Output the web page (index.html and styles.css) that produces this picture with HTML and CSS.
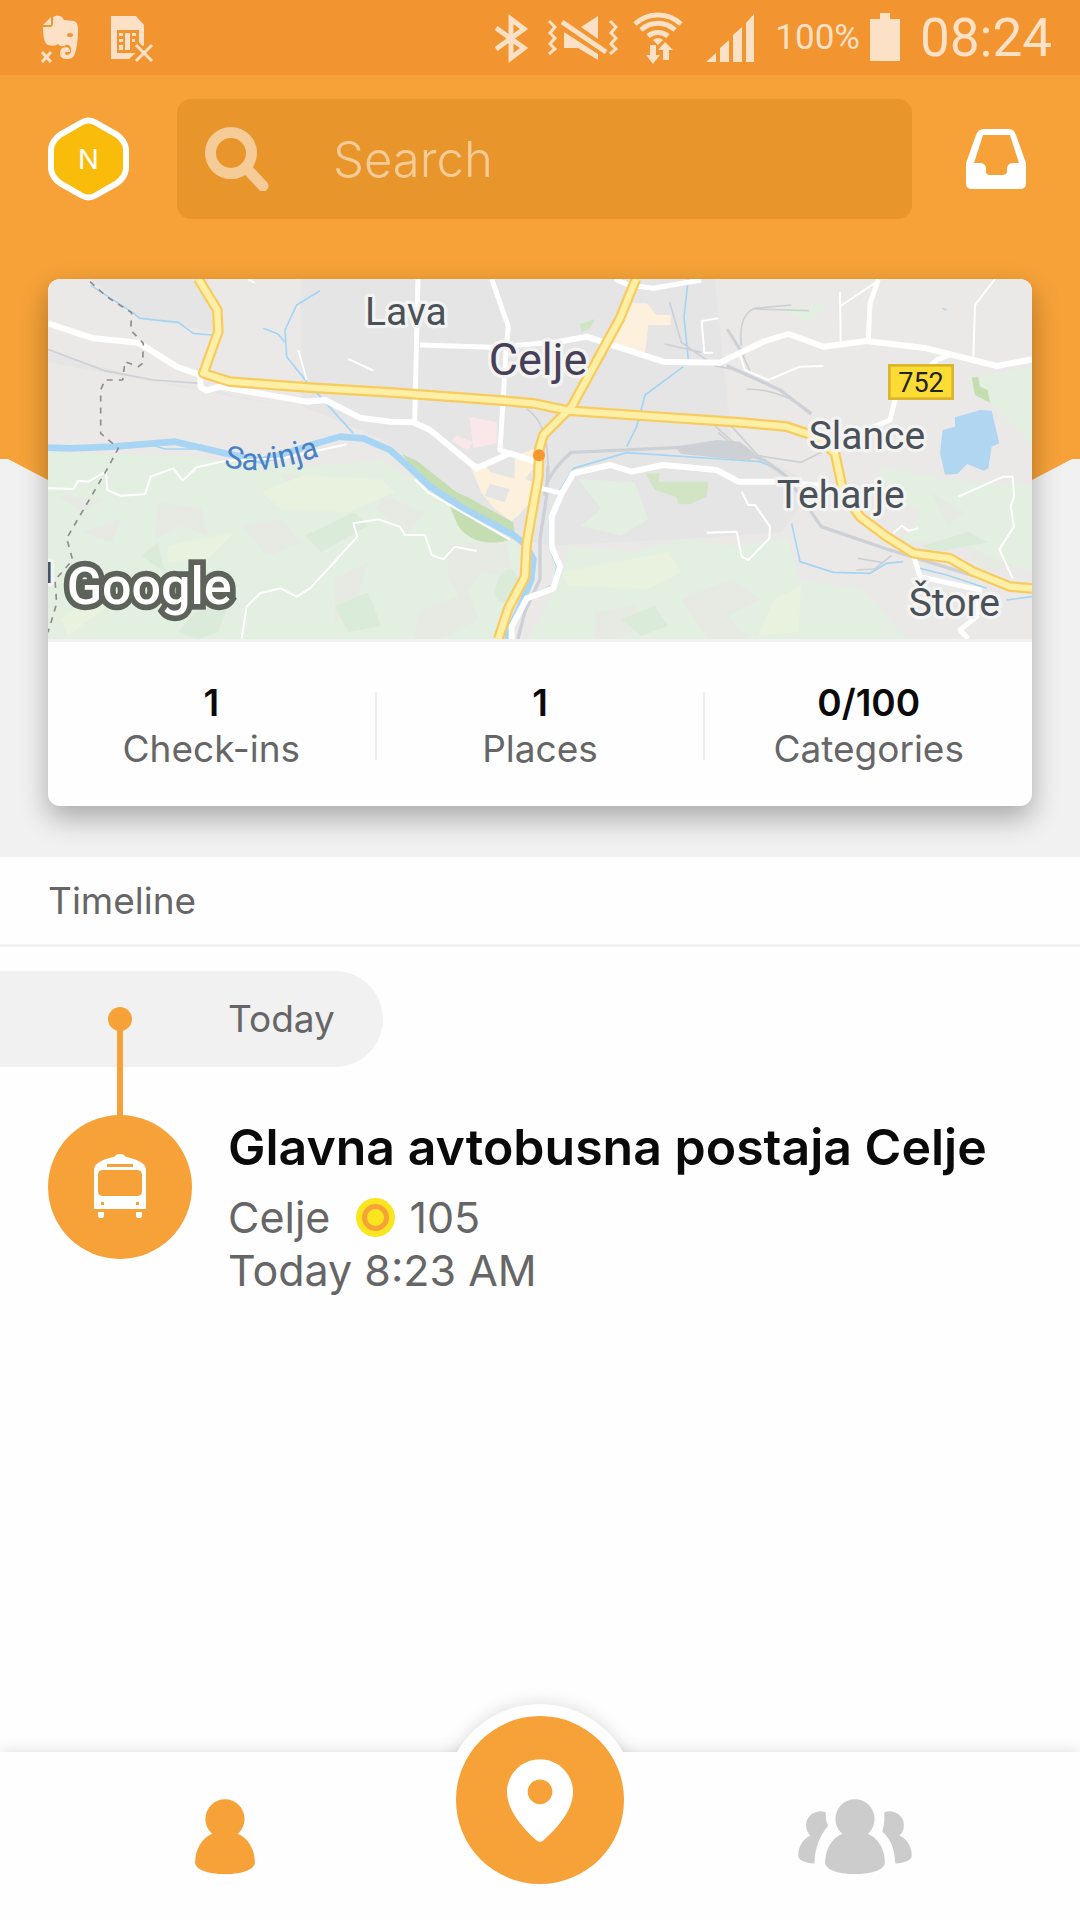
FILE: index.html
```
<!DOCTYPE html>
<html lang="en">
<head>
    <meta charset="UTF-8">
    <meta name="viewport" content="width=device-width, initial-scale=1">
    <title>Profile</title>
    <link rel="stylesheet" href="styles.css">
</head>
<body>
    <div class="status-bar">
        <div class="status-left">
            <svg width="70" height="54" viewBox="0 0 70 54">
                <path d="M2 14L10 6V14Z"/>
                <path d="M2 16H10Q12 15 12 12V6Q16 3 21 6L23 9L33 10Q37 11 37 18Q37 36 33 45Q31 48 26 48Q19 48 19 42Q19 36 26 36Q29 37 29 41H25Q23 42 25 44Q31 44 30 38Q29 33 25 34Q20 37 17 33Q14 36 7 34Q2 32 2 16Z"/>
                <ellipse class="cut" cx="29" cy="24" rx="3" ry="2"/>
                <path class="line" d="M1 41L10 51M10 41L1 51"/>
            </svg>
            <svg width="43" height="54" viewBox="0 0 43 54">
                <path d="M0 5H25L33 14V34L18 48H0Z"/>
                <path class="cut" d="M6 19H28V42H6Z"/>
                <path d="M8 22H12V25H8ZM8 28H12V31H8ZM8 34H12V39H8ZM14 22H19V39H14ZM21 22H25V25H21ZM21 28H24V31H21Z"/>
                <path class="line halo" d="M25 34L41 50M41 34L25 50"/>
                <path class="line" d="M25 34L41 50M41 34L25 50"/>
            </svg>
        </div>
        <div class="status-right">
            <svg width="43" height="54" viewBox="0 0 43 54">
                <path class="line bold" d="M1 17L29 37L16 47V8L29 18L1 38"/>
            </svg>
            <svg width="75" height="54" viewBox="0 0 75 54">
                <path class="line" d="M1 10L7 16L2 22L7 27L2 33L7 38L1 43M62 10L68 16L63 22L68 27L63 33L68 38L62 43"/>
                <path class="line bold" d="M14 11L58 41"/>
                <path d="M33 16L50 5V28ZM16 21L50 43V49L30 37H16Z"/>
            </svg>
            <svg width="63" height="54" viewBox="0 0 63 54">
                <path class="line bold" d="M2 13A34 34 0 0 1 48 13M8 19A25 25 0 0 1 42 19M15 25A16 16 0 0 1 35 25"/>
                <path d="M20 29Q25 25 30 29L25 34ZM17 34H23V44H27L20 53L13 44H17ZM32 31L40 39H36V49H30V39H25Z"/>
            </svg>
            <svg width="59" height="54" viewBox="0 0 59 54">
                <path d="M0 51L10 42V51ZM14 51V37L23 29V51ZM27 51V24L36 16V51ZM40 51V12L48 3V51Z"/>
            </svg>
            <span class="battery-text">100%</span>
            <svg width="40" height="54" viewBox="0 0 40 54">
                <path d="M0 8H10V2H20V8H30V50H0Z"/>
            </svg>
            <span class="clock">08:24</span>
        </div>
    </div>

    <header class="hero">
        <div class="top-bar">
            <button type="button" class="avatar" aria-label="Profile">
                <svg width="81" height="84" viewBox="0 0 82 84">
                    <path class="avatar-shape" d="M34 5Q41 1 48 5L69 17Q78 23 79 32V52Q78 61 69 67L48 79Q41 83 34 79L13 67Q4 61 3 52V32Q4 23 13 17Z"/>
                    <text class="avatar-letter" x="41" y="52">N</text>
                </svg>
            </button>
            <label class="search">
                <svg width="64" height="64" viewBox="0 0 64 64">
                    <circle cx="26" cy="26" r="20.5"/>
                    <path d="M43 43L58 59"/>
                </svg>
                <input type="search" placeholder="Search" aria-label="Search">
            </label>
            <button type="button" class="inbox" aria-label="Inbox">
                <svg width="60" height="60" viewBox="0 0 60 60">
                    <path fill="#fff" fill-rule="evenodd" d="M18 0H43Q48 0 50 6L60 34V54Q60 60 54 60H6Q0 60 0 54V34L10 6Q12 0 18 0ZM17 6L8 34H14Q19 34 20 39V43Q20 46 24 46H36Q41 46 41 42V39Q42 34 47 34H53L44 6Z"/>
                </svg>
            </button>
        </div>

        <section class="card">
            <svg class="map" viewBox="0 0 2952 1080">
                <rect class="land" width="2952" height="1080"/>
                <!-- built-up area -->
                <path class="city" d="M150 0H2000L2050 480L2300 620L2200 760L1900 780L1500 800L1400 780L1000 480L760 380L760 0H480L500 160L276 118L126 0ZM0 220L330 310L480 330L700 380L0 250Z"/>
                <!-- hills -->
                <path class="hill" d="M0 520L380 530L530 545L800 560L1000 545L1160 640L1400 790L1420 830L1370 1000L1340 1080H0ZM1440 1080L1540 900L1560 800L1760 820L1900 780L2060 800L2220 780L2250 900L2440 930L2580 1080ZM1590 600L1760 610L1800 720L1720 770L1600 740L1660 690ZM2490 560L2680 600L2952 620V880L2850 840L2700 790L2560 790L2620 700L2500 640ZM2200 90L2340 75L2280 130ZM2750 300L2952 260V500L2890 430Z"/>
                <path class="rock" d="M30 650L170 660L100 700ZM330 670L460 690L480 770L400 740L320 780ZM580 740L700 720L760 790L660 830ZM100 760L220 720L190 790ZM700 580L800 600L720 640ZM1010 650L1130 700L1080 760L980 690ZM1200 800L1370 780L1400 900L1300 880L1240 960L1200 900ZM1110 1000L1260 940L1290 1020L1180 1080H1100ZM1640 1000L1760 980L1800 1050L1700 1080H1640ZM1900 960L2050 900L2140 960L2040 1010L2100 1080H1980ZM2650 640L2750 700L2700 740ZM2750 800L2900 860L2800 880ZM860 900L960 850L920 980L860 1030ZM300 930L520 1000L440 1030Z"/>
                <path class="meadow" d="M640 640L760 590L1000 600L1040 640L900 700L700 690ZM360 800L560 760L480 840L360 850ZM1540 880L1700 850L1860 820L1900 880L1800 930L1560 920ZM2180 960L2260 920L2250 1060L2130 1070ZM40 1020L200 900L180 980L60 1070Z"/>
                <path class="forest" d="M770 770L920 700L960 740L820 820ZM280 830L330 790L350 880ZM1350 900Q1390 840 1410 900L1390 960Q1350 990 1340 940ZM390 1060L440 1000L540 980L510 1060L450 1080ZM860 980L960 940L1000 1040L900 1060ZM2620 800L2760 760L2820 790L2660 820ZM1720 1020L1820 980L1860 1040L1780 1070Z"/>
                <path class="park" d="M1061 525L1106 545L1226 640L1260 655L1396 730L1401 775L1246 690L1140 620ZM1206 683L1386 783Q1280 810 1230 740ZM2771 295H2791L2796 323L2819 333L2826 371L2781 348Z"/>
                <path class="park-light" d="M1791 583H1836L1830 608H1981L1976 653L1926 676H1891L1886 655L1821 633ZM1596 135L1640 120L1625 150L1600 160Z"/>
                <path class="quarter" d="M1751 73H1796L1826 108H1868V138H1801L1791 221L1691 190ZM1260 545L1310 560L1330 580L1400 600V530L1456 510V570L1430 600L1456 610V660L1410 710L1390 725L1340 690L1300 640ZM1325 615L1310 650L1370 670L1385 630Z"/>
                <path class="hospital" d="M1264 413L1346 430V493L1276 508ZM1225 470L1275 490L1258 515L1210 485Z"/>

                <!-- water -->
                <path class="river" d="M0 506L66 508L196 503L381 488L531 523L640 545L806 493L876 473L946 478L1026 513L1066 548L1146 623L1246 688L1396 768L1430 795L1456 840L1450 900L1424 965L1390 1040L1376 1080"/>
                <path class="stream" d="M130 20L250 98L276 118L391 130L436 163L491 168M816 35L746 78L711 153L716 233L776 308L916 463M646 148L690 165L711 190M1921 0L1908 113L1921 243M1906 263L1791 348L1766 443L1736 503M2196 573L2136 548L2016 540L1736 521L1576 568L1536 633L1504 723V803L1526 863L1516 918L1440 950M2231 733L2256 848L2356 880L2466 883L2516 853L2566 848M2616 868L2696 888L2816 928M2876 963L2952 953M320 500L350 510H440"/>
                <path class="lake" d="M2721 415L2796 393L2831 395L2854 493L2831 503L2821 568L2806 575L2758 555L2728 585L2691 587L2676 523L2684 453L2721 443ZM2680 85L2700 92L2690 95Z"/>

                <!-- railways -->
                <path class="rail" d="M0 211L170 275L316 303L456 313M2036 150L2085 230L2110 285M2230 78L2120 88Q2070 110 2080 200M2282 95L2120 90M1865 70L1900 190L2000 260L2076 275M1850 195L1960 220M1436 390Q1500 430 1500 560M2040 150L2090 230M2095 330Q2200 330 2290 400M2000 440L2100 530M2010 460L2080 520M2040 430L2130 530L2260 550L2320 520M2430 838L2500 850M2425 873L2480 870L2530 830"/>
                <path class="rail wide" d="M2036 260L2196 333L2290 405M1490 650Q1490 590 1570 520L1900 505L2076 515L2150 545L2216 593L2320 743L2516 810L2776 890M1500 560L1496 650L1476 780V900L1430 1000L1410 1080"/>
                <path class="yard" d="M1880 503L2006 483L2076 488L2130 530L2100 545L1900 525Z"/>

                <!-- local roads -->
                <path class="road thin" d="M0 628L76 630L91 605L121 608L174 578L178 633L216 650L291 646L308 593L376 568L404 605L446 565L531 546L706 538L896 496M581 1079L596 983L636 943L698 928L746 953L786 928L851 858L928 773L916 733L991 721L1056 743L1071 768H1131L1151 828L1186 841L1221 803L1286 816M751 213L776 303M901 240L976 275M600 0L620 12M2011 118L1961 126L1969 221H1996M2376 38L2378 186M2378 81L2491 5M2841 0L2781 78L2776 233M2076 228L2091 273L2161 303L2256 263L2326 261M2081 638L2101 678H2121L2166 743L2164 778L2101 843L2081 833L2066 758L1976 761M2731 653L2866 593H2894L2898 653L2888 683L2898 743L2854 811L2894 898M2536 763L2561 740L2581 755L2611 748M1100 600L1140 640L1386 783"/>
                <path class="road" d="M1110 0L1100 430M1331 0L1381 143L1375 200L1365 370L1356 513L1386 523M1116 198L1331 205L1536 188M2491 0L2466 73L2461 183M2706 228L2666 243L2541 363L2526 423L2456 453M2596 828L2616 893L2796 933L2786 1013L2736 1053L2761 1079M1701 0L1741 18L1816 28L1960 3M1481 628L1541 643"/>
                <path class="road main" d="M0 133L136 178L271 191L386 263L456 288L458 325L476 335L516 323L776 368L831 363L936 416L1026 428L1096 430L1146 453L1286 568L1386 523L1461 548M1536 188L1616 173L1676 193L1846 248L2016 251L2146 188L2221 165L2326 203L2456 186L2636 208L2846 261L2952 241M2316 620L2186 608H2071L2006 573L1846 558L1751 578L1686 558L1576 583L1541 643L1511 713V803L1536 863L1516 928L1436 958L1391 1043V1080"/>

                <!-- highways -->
                <path class="highway-edge" d="M451 0L508 93L511 158L466 283L546 308L786 326L1026 340L1366 365L1456 373L1561 395L1796 411L2076 430L2216 443L2306 473L2361 523L2376 593L2386 643L2436 713L2516 773L2596 823L2706 838L2776 878L2886 923L2952 928M1764 0L1716 118L1571 383L1486 468L1474 510L1471 593L1436 793L1431 893L1381 988L1351 1080"/>
                <path class="highway" d="M451 0L508 93L511 158L466 283L546 308L786 326L1026 340L1366 365L1456 373L1561 395L1796 411L2076 430L2216 443L2306 473L2361 523L2376 593L2386 643L2436 713L2516 773L2596 823L2706 838L2776 878L2886 923L2952 928M1764 0L1716 118L1571 383L1486 468L1474 510L1471 593L1436 793L1431 893L1381 988L1351 1080"/>
                <path class="border" d="M126 8L176 53L251 101L248 153L286 193L284 253L271 263L231 248L224 303H171L158 333V463L211 508L176 573L56 778L74 843L21 903L26 973L0 1060"/>

                <text class="place" x="951" y="137">Lava</text>
                <text class="place town" x="1322" y="287">Celje</text>
                <text class="place" x="2282" y="510">Slance</text>
                <text class="place" x="2186" y="688">Teharje</text>
                <text class="place" x="2582" y="1010">Štore</text>
                <text class="place" x="-12" y="913">ı</text>
                <path id="savinja" fill="none" d="M526 560Q650 602 860 514"/>
                <text class="water-name"><textPath href="#savinja">Savinja</textPath></text>
                <rect class="shield" x="2524" y="259" width="190" height="100"/>
                <text class="shield-text" x="2619" y="338">752</text>
                <text class="google" x="56" y="974">Google</text>
                <circle class="checkin" cx="1473" cy="529" r="18"/>
            </svg>
            <div class="stats">
                <div class="stat">
                    <strong>1</strong>
                    <span>Check-ins</span>
                </div>
                <div class="stat">
                    <strong>1</strong>
                    <span>Places</span>
                </div>
                <div class="stat">
                    <strong>0/100</strong>
                    <span>Categories</span>
                </div>
            </div>
        </section>
    </header>

    <main class="timeline">
        <h2>Timeline</h2>
        <div class="day">Today</div>
        <article class="visit">
            <div class="visit-icon">
                <svg width="52" height="66" viewBox="0 0 52 66">
                    <path fill="#fff" fill-rule="evenodd" d="M20 3Q22 0 26 0Q30 0 32 3Q52 7 52 16V55H0V16Q0 7 20 3ZM13 10V13H39V10ZM9 16Q4 16 4 21V37Q4 42 9 42H43Q48 42 48 37V21Q48 16 43 16ZM7 48V51H10V48ZM42 48V51H45V48ZM4 58H10V62Q10 64 8 64H6Q4 64 4 62ZM42 58H48V62Q48 64 46 64H44Q42 64 42 62Z"/>
                </svg>
            </div>
            <div class="visit-info">
                <h3>Glavna avtobusna postaja Celje</h3>
                <p class="visit-place">
                    <span>Celje</span>
                    <svg width="39" height="39" viewBox="0 0 39 39">
                        <circle cx="19.5" cy="19.5" r="19.5" fill="#fbe51e"/>
                        <circle cx="19.5" cy="19.5" r="11" fill="none" stroke="#f6a238" stroke-width="5"/>
                    </svg>
                    <span>105</span>
                </p>
                <p>Today 8:23 AM</p>
            </div>
        </article>
    </main>

    <nav class="bottom-nav">
        <button type="button" class="nav-item active" aria-label="Me">
            <svg width="60" height="75" viewBox="0 0 180 226">
                <circle cx="90" cy="60" r="59"/>
                <path d="M53 104C20 118 0 151 0 191C0 211 35 226 90 226S180 211 180 191C180 151 160 118 127 104Z"/>
            </svg>
        </button>
        <button type="button" class="checkin-btn" aria-label="Check in">
            <svg width="66" height="83" viewBox="0 0 198 248">
                <path fill="#fff" fill-rule="evenodd" d="M99 0C44 0 0 44 0 98C0 150 40 200 88 243Q99 252 110 243C158 200 198 150 198 98C198 44 154 0 99 0ZM99 61A37 37 0 1 1 99 135A37 37 0 1 1 99 61Z"/>
            </svg>
        </button>
        <button type="button" class="nav-item" aria-label="Friends">
            <svg width="114" height="75" viewBox="0 0 342 226">
                <circle cx="171" cy="60" r="59"/>
                <path d="M134 104C101 118 81 151 81 191C81 211 116 226 171 226S261 211 261 191C261 151 241 118 208 104Z"/>
                <path d="M83 41A42 42 0 0 0 37 110C15 120 0 142 0 171C0 184 20 193 49 194C49 150 65 110 90 80C84 68 82 56 83 41Z"/>
                <path d="M259 41A42 42 0 0 1 305 110C327 120 342 142 342 171C342 184 322 193 292 194C292 150 277 120 253 97C259 80 261 60 259 41Z"/>
            </svg>
        </button>
    </nav>
</body>
</html>
```

FILE: styles.css
```
* {
    box-sizing: border-box;
}
body {
    margin: 0;
    min-height: 100vh;
    display: flex;
    flex-direction: column;
    background: #fefefe;
    color: #666;
    font-family: Inter, "Open Sans", sans-serif;
    font-size: 37px;
}
button {
    padding: 0;
    border: none;
    background: none;
    cursor: pointer;
}
svg {
    display: block;
    flex-shrink: 0;
}
h2, h3, p {
    margin: 0;
    font-weight: 400;
}

/* status bar */
.status-bar {
    height: 75px;
    padding: 0 28px 0 41px;
    display: flex;
    align-items: center;
    justify-content: space-between;
    background: #f2942f;
    color: #fce1c6;
    fill: #fce1c6;
    font-family: Roboto, sans-serif;
}
.status-left,
.status-right {
    display: flex;
    align-items: center;
}
.status-right {
    gap: 10px;
}
.status-bar .line {
    fill: none;
    stroke: #fce1c6;
    stroke-width: 3;
}
.status-bar .bold {
    stroke-width: 5;
}
.status-bar .halo {
    stroke: #f2942f;
    stroke-width: 8;
}
.status-bar .cut {
    fill: #f2942f;
}
.battery-text {
    font-size: 35px;
}
.clock {
    font-size: 53px;
    line-height: 80px;
}

/* header */
.hero {
    padding: 24px 48px 51px;
    background: #f1f1f1;
    position: relative;
    z-index: 0;
}
.hero::before {
    content: "";
    position: absolute;
    z-index: -1;
    top: 0;
    left: 0;
    right: 0;
    height: 405px;
    background: #f6a238;
    clip-path: polygon(0 0, 100% 0, 100% 384px, calc(100% - 8px) 384px, calc(100% - 48px) 405px, 48px 405px, 8px 384px, 0 384px);
}
.top-bar {
    display: flex;
    align-items: center;
    gap: 48px;
    padding-right: 6px;
}
.avatar-shape {
    fill: #f9bc0a;
    stroke: #fff;
    stroke-width: 6;
}
.avatar-letter {
    fill: #fff;
    font-family: Inter, sans-serif;
    font-size: 28px;
    text-anchor: middle;
}
.search {
    flex: 1;
    min-width: 0;
    height: 120px;
    margin-right: 6px;
    padding: 0 28px;
    display: flex;
    align-items: center;
    gap: 64px;
    border-radius: 14px;
    background: #e8962b;
}
.search svg {
    fill: none;
    stroke: #f5cb98;
    stroke-width: 11;
    stroke-linecap: round;
}
.search input {
    flex: 1;
    min-width: 0;
    padding: 0;
    border: none;
    outline: none;
    background: none;
    color: #fff;
    font: 300 49px Inter, sans-serif;
}
.search input::placeholder {
    color: #f5cb98;
}

/* map card */
.card {
    margin-top: 60px;
    border-radius: 12px;
    overflow: hidden;
    background: #fefefe;
    box-shadow: 0 12px 28px rgba(0, 0, 0, 0.3);
}
.map {
    width: 100%;
    height: auto;
    font-family: Roboto, sans-serif;
}
.land {
    fill: #eae9e7;
}
.city {
    fill: #e5e5e5;
}
.hill {
    fill: #e3efe1;
}
.rock {
    fill: #e7e9e3;
}
.meadow {
    fill: #e8f2df;
}
.forest {
    fill: #dbebda;
}
.park {
    fill: #c4deb2;
}
.park-light {
    fill: #d1e5c5;
}
.quarter {
    fill: #fdf1de;
    fill-rule: evenodd;
}
.hospital {
    fill: #fae7ea;
}
.lake {
    fill: #b0d6f1;
}
.yard {
    fill: #cdd0d4;
}
.river,
.stream,
.rail,
.road,
.highway,
.highway-edge,
.border {
    fill: none;
    stroke-linejoin: round;
}
.river {
    stroke: #a9d5f4;
    stroke-width: 20;
}
.stream {
    stroke: #a4d5f4;
    stroke-width: 5;
}
.rail {
    stroke: #cdd0d4;
    stroke-width: 5;
}
.rail.wide {
    stroke-width: 10;
}
.road {
    stroke: #fff;
    stroke-width: 15;
}
.road.thin {
    stroke-width: 6;
}
.road.main {
    stroke-width: 18;
}
.highway-edge {
    stroke: #f8cb5c;
    stroke-width: 32;
}
.highway {
    stroke: #fdefa5;
    stroke-width: 19;
}
.border {
    stroke: #8d8d8d;
    stroke-width: 5;
    stroke-dasharray: 18 18;
}
.place {
    fill: #4a5159;
    font-size: 117px;
    stroke: #f3f3f2;
    stroke-width: 20;
    stroke-linejoin: round;
    paint-order: stroke;
}
.place.town {
    fill: #473f57;
    font-size: 135px;
}
.water-name {
    fill: #4a80c4;
    font-size: 93px;
}
.shield {
    fill: #fddc35;
    stroke: #dcb52d;
    stroke-width: 8;
}
.shield-text {
    fill: #222;
    font-size: 81px;
    text-anchor: middle;
}
.google {
    fill: #fff;
    font-size: 156px;
    font-weight: 500;
    stroke: #5d635b;
    stroke-width: 34;
    paint-order: stroke;
}
.checkin {
    fill: #f6982f;
}

.stats {
    display: flex;
    padding: 50px 0 46px;
    border-top: 3px solid #f1f1f1;
}
.stat {
    flex: 1;
    height: 68px;
    display: flex;
    flex-direction: column;
    align-items: center;
    justify-content: space-between;
    line-height: 22px;
}
.stat + .stat {
    border-left: 2px solid #eee;
}
.stat strong {
    color: #0a0a0a;
    font-weight: 600;
}

/* timeline */
.timeline {
    flex: 1;
}
.timeline h2 {
    padding: 0 48px;
    font-size: 37px;
    line-height: 87px;
    border-bottom: 3px solid #f1f1f1;
}
.day {
    width: fit-content;
    margin: 24px 0 48px;
    padding: 0 48px 0 228px;
    line-height: 96px;
    border-radius: 0 48px 48px 0;
    background: #f1f1f1;
}
.visit {
    display: flex;
    gap: 36px;
    padding: 0 48px;
}
.visit-icon {
    position: relative;
    flex-shrink: 0;
    width: 144px;
    height: 144px;
    display: flex;
    align-items: center;
    justify-content: center;
    border-radius: 50%;
    background: #f6a238;
}
/* connector up to the day label */
.visit-icon::before,
.visit-icon::after {
    content: "";
    position: absolute;
    left: 50%;
    transform: translateX(-50%);
    background: #f6a238;
}
.visit-icon::before {
    top: -96px;
    width: 6px;
    height: 100px;
}
.visit-icon::after {
    top: -108px;
    width: 24px;
    height: 24px;
    border-radius: 50%;
}
.visit-info {
    font-size: 43px;
    line-height: 53px;
}
.visit h3 {
    margin-bottom: 12px;
    color: #0a0a0a;
    font-size: 50px;
    font-weight: 600;
    line-height: 64px;
}
.visit-place {
    display: flex;
    align-items: center;
    gap: 14px;
}
.visit-place svg {
    margin-left: 12px;
}

/* bottom navigation */
.bottom-nav {
    position: sticky;
    bottom: 0;
    height: 168px;
    display: grid;
    grid-template-columns: 1fr 180px 1fr;
    align-items: center;
    justify-items: center;
    background: #fefefe;
    box-shadow: 0 0 14px rgba(0, 0, 0, 0.14);
}
/* white ring behind the check-in button, only its cap rises over the bar */
.bottom-nav::before {
    content: "";
    position: absolute;
    top: -48px;
    left: 50%;
    width: 192px;
    height: 192px;
    margin-left: -96px;
    border-radius: 50%;
    background: #fefefe;
    box-shadow: 0 0 18px rgba(0, 0, 0, 0.14);
    clip-path: inset(-20px -20px 144px -20px);
}
.nav-item {
    fill: #ccc;
}
.nav-item.active {
    fill: #f6a238;
}
.checkin-btn {
    position: relative;
    width: 168px;
    height: 168px;
    margin-top: -72px;
    display: flex;
    align-items: center;
    justify-content: center;
    border-radius: 50%;
    background: #f6a238;
}
```
